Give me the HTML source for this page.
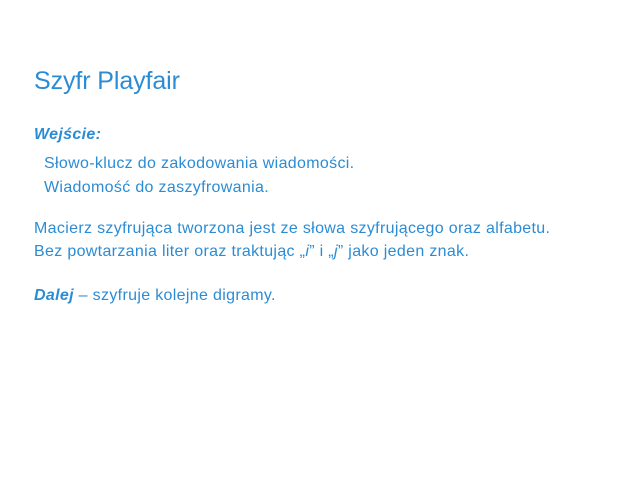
<!DOCTYPE html>
<html><head><meta charset="utf-8"><style>
body{margin:0;width:640px;height:480px;background:#fff;font-family:"Liberation Sans",sans-serif;color:#2b8cd4;position:relative;overflow:hidden}
div{position:absolute;white-space:nowrap;font-size:16px;letter-spacing:0.33px}
.t{font-size:25px;left:34px;top:67px;letter-spacing:-0.1px}
b{font-style:italic}
</style></head><body>
<div class="t">Szyfr Playfair</div>
<div style="left:34px;top:126px"><b>Wejście:</b></div>
<div style="left:44px;top:155px">Słowo-klucz do zakodowania wiadomości.</div>
<div style="left:44px;top:179px">Wiadomość do zaszyfrowania.</div>
<div style="left:34px;top:220px">Macierz szyfrująca tworzona jest ze słowa szyfrującego oraz alfabetu.</div>
<div style="left:34px;top:243px">Bez powtarzania liter oraz traktując „<i>i</i>” i „<i>j</i>” jako jeden znak.</div>
<div style="left:34px;top:287px"><b>Dalej</b> – szyfruje kolejne digramy.</div>
</body></html>
